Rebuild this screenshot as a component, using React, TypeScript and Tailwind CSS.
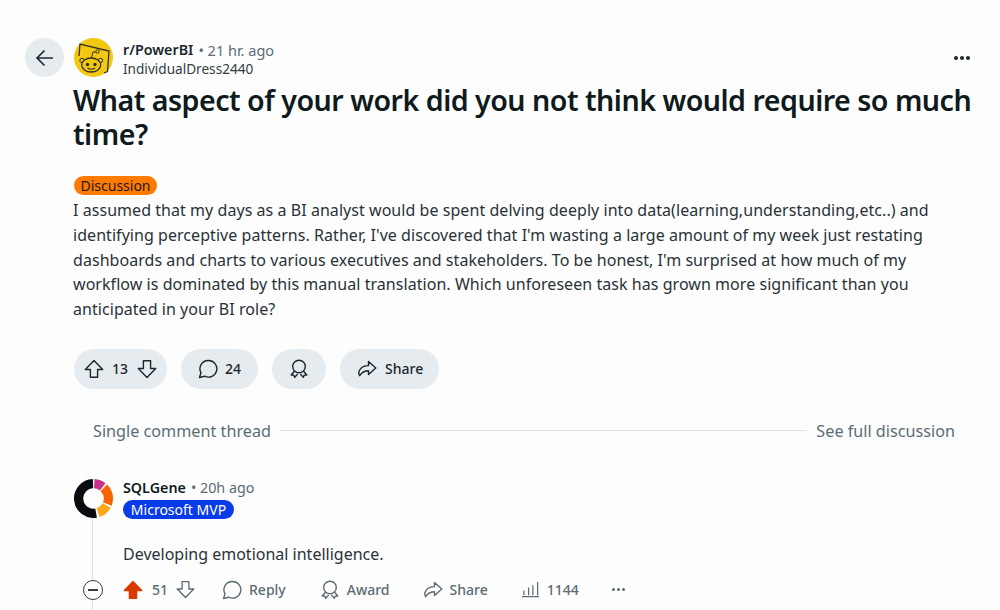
import React from "react";

const F = "font-['Noto_Sans',sans-serif]";

function Up({ className = "", filled = false }: { className?: string; filled?: boolean }) {
  return (
    <svg viewBox="0 0 20 20" className={className} fill={filled ? "#d93a00" : "none"} stroke={filled ? "#d93a00" : "currentColor"} strokeWidth="1.4" strokeLinejoin="round">
      <path d="M10 1.500 1.300 10.500h5.100V18.300h7.200v-7.800h5.100z" />
    </svg>
  );
}
function Down({ className = "" }: { className?: string }) {
  return (
    <svg viewBox="0 0 20 20" className={className} fill="none" stroke="currentColor" strokeWidth="1.4" strokeLinejoin="round">
      <path d="M10 18.500 1.300 9.500h5.100V1.700h7.200v7.800h5.100z" />
    </svg>
  );
}
function Bubble({ className = "" }: { className?: string }) {
  return (
    <svg viewBox="0 0 20 20" className={className} fill="none" stroke="currentColor" strokeWidth="1.4" strokeLinejoin="round">
      <path d="M10.500 1.500a8.300 8.300 0 1 1-3.700 15.700L1.500 18.500l1.500-4.700A8.300 8.300 0 0 1 10.500 1.500z" />
    </svg>
  );
}
function Award({ className = "" }: { className?: string }) {
  return (
    <svg viewBox="0 0 20 20" className={className} fill="none" stroke="currentColor" strokeWidth="1.4" strokeLinejoin="round">
      <circle cx="10" cy="7.500" r="6.300" />
      <path d="M5.600 12 2.200 16l2.600.1.900 2.300L8.600 15M14.400 12l3.400 4-2.600.1-.9 2.300-3-3.400" />
    </svg>
  );
}
function Share({ className = "" }: { className?: string }) {
  return (
    <svg viewBox="0 0 20 20" className={className} fill="none" stroke="currentColor" strokeWidth="1.4" strokeLinejoin="round">
      <path d="M11.500 2.500 18.800 9l-7.300 6.500v-3.700c-3.800 0-6.500 1.200-8.800 4.900-1.600-2.200-.6-5.200 1-7.100 1.900-2.200 4.800-3 7.800-3z" />
    </svg>
  );
}

export default function App() {
  return (
    <div className={`${F} w-[1000px] h-[610px] overflow-hidden bg-[#fdfdfe] text-[#1a282d] relative`}>
      <div className="flex pt-[38px] pl-[25px] pr-[30px] h-[82px]">
        <div className="w-[39px] h-[39px] rounded-full bg-[#e5ebee] flex items-center justify-center mr-[10px]">
          <svg viewBox="0 0 20 20" className="w-[20px] h-[20px]" fill="none" stroke="#1a282d" strokeWidth="1.6">
            <path d="M18 10H2M9.500 2.500 2 10l7.500 7.500" />
          </svg>
        </div>
        <svg viewBox="0 0 39 39" className="w-[39px] h-[39px]">
          <circle cx="19.500" cy="19.500" r="19.500" fill="#f2c811" />
          <path d="M5 18 6 6 35 13 33.500 33.500 30 35" fill="none" stroke="#33312a" strokeWidth="1.300" />
          <circle cx="8" cy="22.500" r="2.200" fill="#f2c811" stroke="#33312a" />
          <circle cx="26.500" cy="22.500" r="2.200" fill="#f2c811" stroke="#33312a" />
          <ellipse cx="17.200" cy="27" rx="9.500" ry="7" fill="#f2c811" stroke="#33312a" strokeWidth="1.300" />
          <circle cx="13.500" cy="26.500" r="1.700" fill="#33312a" />
          <circle cx="21" cy="26.500" r="1.700" fill="#33312a" />
          <path d="M13.500 30c2 1.700 5.500 1.700 7.500 0" fill="none" stroke="#33312a" strokeWidth="1.100" />
          <path d="M17.500 20 19 14 22 14" fill="none" stroke="#33312a" strokeWidth="1" />
          <circle cx="23.500" cy="13.500" r="1.700" fill="#f2c811" stroke="#33312a" strokeWidth="1" />
        </svg>
        <div className="ml-[10px] pt-[2px]">
          <div className="flex items-center h-[20px] text-[14.300px] leading-[20px] whitespace-nowrap">
            <span className="font-semibold text-[#1a282d]">r/PowerBI</span>
            <span className="text-[#5c6c74] ml-[5px] text-[14.500px]">• 21 hr. ago</span>
          </div>
          <div className="text-[13.600px] leading-[18px] text-[#333d42] whitespace-nowrap">IndividualDress2440</div>
        </div>
        <div className="ml-auto flex gap-[2px] pt-[18px] h-[4px]">
          <span className="block w-[4px] h-[4px] rounded-full bg-[#1a282d]" />
          <span className="block w-[4px] h-[4px] rounded-full bg-[#1a282d]" />
          <span className="block w-[4px] h-[4px] rounded-full bg-[#1a282d]" />
        </div>
      </div>
      <div className="pl-[74px] pr-[20px]">
        <h1 className="text-[28.600px] tracking-[-0.5px] leading-[34px] font-semibold text-[#0f1a1c] mt-[1px] -ml-px">
          What aspect of your work did you not think would require so much time?
        </h1>
        <div className="mt-[25px] h-[19px] w-[83px] rounded-full bg-[#ff7a00] text-[14px] leading-[19px] text-center text-[#1a1a1a]">Discussion</div>
        <p className="mt-[3px] -ml-px text-[16px] tracking-[0.05px] leading-[24.750px] text-[#2a3236] w-[880px]">
          I assumed that my days as a BI analyst would be spent delving deeply into data(learning,understanding,etc..) and identifying perceptive patterns. Rather, I've discovered that I'm wasting a large amount of my week just restating dashboards and charts to various executives and stakeholders. To be honest, I'm surprised at how much of my workflow is dominated by this manual translation. Which unforeseen task has grown more significant than you anticipated in your BI role?
        </p>
        <div className="flex mt-[27px] gap-[14px] text-[14px] font-medium text-[#1a282d]">
          <div className="flex items-center h-[40px] w-[93px] rounded-full bg-[#e5ebee] pl-[10px]">
            <Up className="w-[20px] h-[20px]" />
            <span className="ml-[8px] w-[16px]">13</span>
            <Down className="w-[20px] h-[20px] ml-[9px]" />
          </div>
          <div className="flex items-center h-[40px] w-[77px] rounded-full bg-[#e5ebee] pl-[17px]">
            <Bubble className="w-[20px] h-[20px]" />
            <span className="ml-[7px]">24</span>
          </div>
          <div className="flex items-center justify-center h-[40px] w-[54px] rounded-full bg-[#e5ebee]">
            <Award className="w-[20px] h-[20px]" />
          </div>
          <div className="flex items-center h-[40px] w-[99px] rounded-full bg-[#e5ebee] pl-[17px]">
            <Share className="w-[20px] h-[20px]" />
            <span className="ml-[8px]">Share</span>
          </div>
        </div>
        <div className="flex items-center mt-[31px] pl-[19px] pr-[26px] h-[22px] text-[16.200px] text-[#5c6c74] whitespace-nowrap">
          <span>Single comment thread</span>
          <div className="flex-1 h-px bg-[#dfe3e6] mx-[9px]" />
          <span className="-mr-px">See full discussion</span>
        </div>
      </div>
      <div className="pl-[74px] pt-[37px] relative">
        <div className="flex">
          <svg viewBox="0 0 40 40" className="w-[39px] h-[39px]">
            <g fill="none" strokeWidth="9.500">
              <path d="M22.650 35.020A15.250 15.250 0 1 1 19.470 4.760" stroke="#0b0b12" />
              <path d="M20.800 4.770A15.250 15.250 0 0 1 29.390 7.980" stroke="#cb2f8a" />
              <path d="M30.590 9.030A15.250 15.250 0 0 1 34.140 25.710" stroke="#fa6400" />
              <path d="M33.460 27.160A15.250 15.250 0 0 1 24.710 34.500" stroke="#fda616" />
            </g>
          </svg>
          <div className="ml-[10px] -mt-[1px]">
            <div className="flex items-center h-[20px] text-[14.300px] leading-[20px] whitespace-nowrap">
              <span className="font-semibold text-[#0f1a1c]">SQLGene</span>
              <span className="text-[#5c6c74] ml-[5px] text-[14.300px]">• 20h ago</span>
            </div>
            <div className="mt-[2px] h-[19px] w-[111px] rounded-full bg-[#0a3be8] text-[14px] leading-[19px] text-center text-white whitespace-nowrap">Microsoft MVP</div>
          </div>
        </div>
        <div className="absolute left-[92px] top-[76px] w-px h-[100px] bg-[#d8dee1]" />
        <p className="pl-[49px] mt-[23px] text-[16px] leading-[24px] text-[#2a3236]">Developing emotional intelligence.</p>
        <div className="flex items-center mt-[10px] h-[28px] text-[14px] font-medium text-[#5c6c74] whitespace-nowrap">
          <div className="w-[20px] h-[20px] rounded-full border-[1.500px] border-[#333d42] bg-[#fdfdfe] ml-[9px] relative z-10 flex items-center justify-center">
            <span className="block w-[10px] h-[1.500px] bg-[#333d42]" />
          </div>
          <Up filled className="w-[20px] h-[20px] ml-[20px]" />
          <span className="ml-[9px] w-[15px]">51</span>
          <Down className="w-[19px] h-[19px] ml-[9px]" />
          <Bubble className="w-[20px] h-[20px] ml-[27px]" />
          <span className="ml-[7px]">Reply</span>
          <Award className="w-[20px] h-[20px] ml-[34px]" />
          <span className="ml-[7px]">Award</span>
          <Share className="w-[20px] h-[20px] ml-[33px]" />
          <span className="ml-[7px]">Share</span>
          <svg viewBox="0 0 20 20" className="w-[19px] h-[19px] ml-[33px]" fill="none" stroke="currentColor" strokeWidth="1.300">
            <path d="M1 17.500h18M3 16v-5M8 16V8M12.500 16V5.500M17.500 16V2" />
          </svg>
          <span className="ml-[7px]">1144</span>
          <div className="flex gap-[2px] ml-[33px]">
            <span className="block w-[3px] h-[3px] rounded-full bg-[#5c6c74]" />
            <span className="block w-[3px] h-[3px] rounded-full bg-[#5c6c74]" />
            <span className="block w-[3px] h-[3px] rounded-full bg-[#5c6c74]" />
          </div>
        </div>
      </div>
    </div>
  );
}
